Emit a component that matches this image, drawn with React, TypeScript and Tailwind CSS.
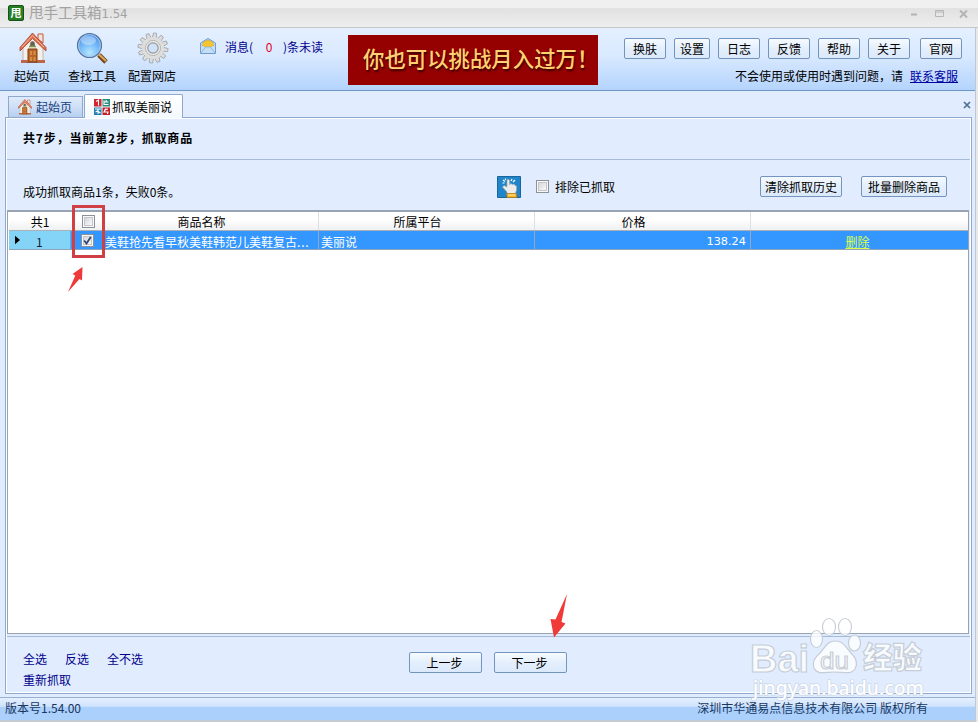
import React from "react";

const HouseIcon = ({ className }: { className: string }) => (
  <svg viewBox="0 0 28 32" className={className}>
    <path d="M19 2h5v9l-5-4z" fill="#f3e3dc" stroke="#c4583c" strokeWidth="1" />
    <path d="M4 14 14 4l10 10v16H4z" fill="#f4efe9" stroke="#b9aaa0" strokeWidth="0.8" />
    <path d="M1 15.500 13.500 1 27 15.500v3.500L13.500 6.500 1 19z" fill="#dd7354" stroke="#b34a30" strokeWidth="0.9" />
    <path d="M3 15 13.500 3.500 25 15" fill="none" stroke="#f3b9a3" strokeWidth="0.900" />
    <path d="M11.500 14v-2.500a2 2 0 0 1 4 0V14z" fill="#55656b" stroke="#8a6b3c" strokeWidth="0.8" />
    <path d="M10 14.500h7" stroke="#7a9a44" strokeWidth="1.500" />
    <path d="M9 17h9v13H9z" fill="#b86628" stroke="#7d3c10" strokeWidth="1" />
    <path d="M11 19h2v4h-2zM14.500 19h2v4h-2zM11 25h2v4h-2zM14.500 25h2v4h-2z" fill="#d98c48" />
    <path d="M2 28h7v3H2zM18 28h8v3h-8z" fill="#bd6449" />
    <path d="M8 30.500h11" stroke="#8a5236" />
  </svg>
);

const SearchIcon = () => (
  <svg viewBox="0 0 32 32" className="h-8 w-8">
    <defs>
      <radialGradient id="lens" cx="0.5" cy="0.8" r="0.8">
        <stop offset="0" stopColor="#b6e8ff" />
        <stop offset="0.5" stopColor="#74b9f8" />
        <stop offset="1" stopColor="#4a8fe8" />
      </radialGradient>
    </defs>
    <path d="m20 20 4 4" stroke="#b8b8b8" strokeWidth="3" />
    <path d="m23 23 7 7" stroke="#74481d" strokeWidth="5" />
    <path d="m23 22.500 7 6.500" stroke="#dda75d" strokeWidth="2" />
    <circle cx="13.500" cy="13.500" r="12" fill="url(#lens)" stroke="#56729b" strokeWidth="1.200" />
    <circle cx="13.500" cy="13.500" r="10.900" fill="none" stroke="#a9c8ec" strokeWidth="1" />
    <ellipse cx="12.500" cy="8.500" rx="7.500" ry="4.500" fill="#fff" opacity="0.35" />
  </svg>
);

const teeth = [0, 30, 60, 90, 120, 150, 180, 210, 240, 270, 300, 330];

const GearIcon = () => (
  <svg viewBox="0 0 32 32" className="h-8 w-8">
    <g fill="#dcdcdc" stroke="#999" strokeWidth="0.7">
      {teeth.map((deg) => (
        <path key={deg} d="m13.800 6 .7-5h3l.7 5z" transform={`rotate(${deg + 8} 16 16)`} />
      ))}
    </g>
    <circle cx="16" cy="16" r="11" fill="#dedede" />
    <circle cx="16" cy="16" r="7.600" fill="#e9e9e9" stroke="#b9b9b9" strokeWidth="1" />
    <circle cx="16" cy="16" r="5.200" fill="#cfe2fa" stroke="#999" strokeWidth="1.200" />
  </svg>
);

const MailIcon = () => (
  <svg viewBox="0 0 16 16" className="h-4 w-4">
    <path d="M.5 5 8 .500 15.500 5v10.500H.5z" fill="#b9d6f2" stroke="#6f9ccb" />
    <path d="M2.500 8C2.500 4 5 2.500 8 2.500S13.500 4 13.500 8L8 10z" fill="#f6c62f" stroke="#d99f1b" strokeWidth="0.6" />
    <path d="M1 7.500 5 9h6l4-1.500V15H1z" fill="#c6def5" />
    <path d="m1 15 4.500-6h5L15 15" fill="none" stroke="#86aed6" strokeWidth="0.8" />
  </svg>
);

const ShopIcon = () => (
  <svg viewBox="0 0 16 16" className="h-4 w-4">
    <path d="M0 0h7.500v7.500H0z" fill="#cf2530" />
    <path d="M8.500 0H16v7.500H8.500z" fill="#2b8c7e" />
    <path d="M0 8.500h7.500V16H0z" fill="#1f7fb2" />
    <path d="M8.500 8.500H16V16H8.500z" fill="#c3202a" />
    <path
      d="M2 2.500 4.500 1v5.500M10 1.500v4h4.500M10 3h4.500M12.200 1v2M1 10h6M4 10v5M1.500 13l2-1 3 2M10 11l4-1M12 9.500l-2 3.500h4l-.5 2"
      fill="none"
      stroke="#fff"
      strokeWidth="1.100"
    />
  </svg>
);

const HandIcon = () => (
  <svg viewBox="0 0 24 22" className="h-[22px] w-6">
    <path d="M.5.5h23v21H.5z" fill="#2185ca" stroke="#17669f" />
    <path d="M10 19v-3l-4.500-5 1.500-1.500L10 11V4.500C10 3 12.500 3 12.500 4.500V9l1-1.500 2 1 1.500-.5 1 1.500 1.500.5V14l-1 3v2z" fill="#ececec" stroke="#aaa" strokeWidth="0.6" />
    <path d="m6 4 2 1.500M7.500 7H5.500M8.500 2.500V4M15 3l-1 2M18 4l-2 2" stroke="#fff" strokeWidth="1.200" />
    <path d="M10 17.500h9.500v4H10z" fill="#f5b62d" stroke="#b87812" strokeWidth="0.8" />
    <path d="M11 19h7.500" stroke="#ffe58b" />
  </svg>
);

const Button = ({ label, className }: { label: string; className: string }) => (
  <button
    className={`flex h-[21px] shrink-0 items-center justify-center rounded-[2px] border border-[#7395bd] bg-linear-to-b from-[#f6faff] from-0% via-[#e4effc] via-50% to-[#dbe9fb] whitespace-nowrap ${className}`}
  >
    <span>{label}</span>
  </button>
);

const Checkbox = ({ checked }: { checked?: boolean }) => (
  <span className="flex h-[13px] w-[13px] shrink-0 items-center justify-center border border-[#8e9297] bg-[#f8f8f8] p-px">
    <span className="flex h-full w-full items-center justify-center border border-[#c3c7cc] bg-linear-to-br from-[#d4d7db] to-[#fafafa]">
      {checked && (
        <svg viewBox="0 0 9 9" className="h-[9px] w-[9px] shrink-0">
          <path d="m1.200 4.500 2.300 3L7.800 1" fill="none" stroke="#31456f" strokeWidth="1.800" />
        </svg>
      )}
    </span>
  </span>
);

const TitleBar = () => (
  <div className="flex h-7 items-center border-b border-[#c3c6ca] bg-linear-to-b from-[#f0f0f0] from-28% via-[#e1e1e1] via-32% to-[#eeeeee] pl-2">
    <div className="mb-0.5 flex h-4 w-4 items-center justify-center rounded-[2px] border border-[#16531a] bg-[#287d23] text-[11px] leading-none font-bold text-white">
      甩
    </div>
    <span className="mb-0.5 ml-[5px] text-[14.5px] leading-5 text-[#a2a2a2]">
      甩手工具箱<span className="text-[13px] [font-family:'DejaVu_Sans_Condensed','DejaVu_Sans',sans-serif]">1.54</span>
    </span>
    <svg viewBox="0 0 60 12" className="mr-[9px] ml-auto h-3 w-[60px]">
      <path d="M2 6.500h6" stroke="#b3b3b3" strokeWidth="2" />
      <path d="M26.500 2.500h8v6h-8zM26 4h9" fill="none" stroke="#b7b7b7" />
      <path d="m51 2.500 7 7m0-7-7 7" stroke="#b3b3b3" strokeWidth="1.800" />
    </svg>
  </div>
);

const ToolBar = () => (
  <div className="flex h-[63px] items-start border-b border-[#6f97c4] bg-linear-to-b from-[#e4f0ff] from-0% via-[#d9e9ff] via-45% to-[#b4d4fd] pl-3.5">
    <div className="flex w-9 flex-col items-center pt-1">
      <HouseIcon className="ml-0.5 h-8 w-7" />
      <span className="mt-[3px] leading-[18px] whitespace-nowrap">起始页</span>
    </div>
    <div className="ml-[18px] flex w-12 flex-col items-center pt-1">
      <SearchIcon />
      <span className="mt-[3px] leading-[18px] whitespace-nowrap">查找工具</span>
    </div>
    <div className="ml-3 flex w-12 flex-col items-center pt-1">
      <div className="ml-0.5">
        <GearIcon />
      </div>
      <span className="mt-[3px] leading-[18px] whitespace-nowrap">配置网店</span>
    </div>
    <div className="ml-6 flex w-[148px] items-center pt-2.5 text-[#00008b]">
      <div className="mb-0.5">
        <MailIcon />
      </div>
      <span className="ml-[9px] w-[30px] whitespace-nowrap">消息(</span>
      <span className="w-7 text-center text-[#e00020]">0</span>
      <span className="whitespace-nowrap">)条未读</span>
    </div>
    <div className="mt-[7px] flex h-[50px] w-[250px] shrink-0 items-center bg-[#950000] pl-[15px] text-[21.4px] font-medium whitespace-nowrap text-[#ffd173] [text-shadow:1px_2px_2px_#3a0000]">
      <span className="mb-[5px]">你也可以挑战月入过万！</span>
    </div>
    <div className="ml-[26px] flex w-[338px] flex-col pt-2.5">
      <div className="flex">
        <Button label="换肤" className="w-[42px]" />
        <Button label="设置" className="ml-2 w-9" />
        <Button label="日志" className="ml-2 w-[42px]" />
        <Button label="反馈" className="ml-2 w-[42px]" />
        <Button label="帮助" className="ml-2 w-[42px]" />
        <Button label="关于" className="ml-2 w-[42px]" />
        <Button label="官网" className="ml-2.5 w-[42px]" />
      </div>
      <div className="mt-2 flex justify-end pr-1 leading-[18px] whitespace-nowrap">
        <span>不会使用或使用时遇到问题，请</span>
        <a className="ml-[7px] text-[#0000a0] underline">联系客服</a>
      </div>
    </div>
  </div>
);

const Tabs = () => (
  <div className="relative z-10 -mb-px flex h-[27px] items-end pl-2">
    <div className="mb-px flex h-[21px] w-[75px] items-center border border-b-0 border-[#8fa9cc] bg-linear-to-b from-[#dfebfb] from-0% via-[#cfdff6] via-50% to-[#b6cff0] pl-[9px] text-[#173f80]">
      <HouseIcon className="h-4 w-3.5" />
      <span className="ml-1 whitespace-nowrap">起始页</span>
    </div>
    <div className="ml-px flex h-6 w-[99px] items-center rounded-t-[2px] border border-b-0 border-[#8fa9cc] bg-linear-to-b from-white to-[#f4f9ff] pl-[9px]">
      <ShopIcon />
      <span className="ml-0.5 whitespace-nowrap">抓取美丽说</span>
    </div>
    <svg viewBox="0 0 8 8" className="mr-1 mb-[9px] ml-auto h-2 w-2">
      <path d="m1 1 6 6m0-6L1 7" stroke="#4f7094" strokeWidth="1.700" />
    </svg>
  </div>
);

const Table = () => (
  <div className="h-[424px] w-[962px] border border-t-2 border-[#98a4b3] bg-white pl-px">
    <div className="flex h-[19px] border-b border-[#a9b0b8] bg-linear-to-b from-white from-40% to-[#eff0f2] text-center leading-[19px]">
      <div className="w-[62px]">共1</div>
      <div className="flex w-[34px] items-center justify-center">
        <Checkbox />
      </div>
      <div className="w-[214px] border-r border-[#dcdfe3] pr-5">商品名称</div>
      <div className="w-[216px] border-r border-[#dcdfe3] pr-[18px]">所属平台</div>
      <div className="w-[216px] border-r border-[#dcdfe3] pr-[18px]">价格</div>
      <div className="w-[217px]" />
    </div>
    <div className="flex h-[19px] border-b border-[#8fa3bb] bg-[#3397ff] leading-[21px] text-white">
      <div className="flex w-[62px] items-center border-r border-[#6fa7d3] bg-[#84d4f7] pl-1.5 text-[#102038]">
        <svg viewBox="0 0 6 10" className="h-2.5 w-[5px]">
          <path d="M0 0v10l6-5z" fill="#000" />
        </svg>
        <span className="mt-0.5 ml-4">1</span>
      </div>
      <div className="flex w-[34px] items-center pl-2.5">
        <Checkbox checked />
      </div>
      <div className="w-[214px] border-r border-[#91a9c4] whitespace-nowrap">
        美鞋抢先看早秋美鞋韩范儿美鞋复古<span className="tracking-[0.8px]">...</span>
      </div>
      <div className="w-[216px] border-r border-[#91a9c4] pl-0.5">美丽说</div>
      <div className="w-[216px] border-r border-[#91a9c4] pr-1 text-right text-[11.3px] [font-family:'DejaVu_Sans','Noto_Sans_CJK_SC',sans-serif]">
        138.24
      </div>
      <div className="w-[217px] pr-1 text-center text-[#ddff4a] underline">删除</div>
    </div>
  </div>
);

const Watermark = () => (
  <svg viewBox="0 0 190 90" className="absolute top-[612px] left-[745px] h-[90px] w-[190px]">
    <g fill="#ffffff" fillOpacity="0.8" stroke="#bcc3cd" strokeOpacity="0.8" strokeWidth="1.200">
      <ellipse cx="71.500" cy="27" rx="6" ry="8.500" />
      <ellipse cx="84" cy="15" rx="6.500" ry="8.500" />
      <ellipse cx="100" cy="15" rx="6.500" ry="8.500" />
      <ellipse cx="109.500" cy="31" rx="6" ry="8" />
      <path d="M90 29c-8 0-10 7-15 12-6 5-8 10-6 15 3 7 10 4 20 4s17 3 21-3c3-5 1-11-4-16s-7-12-16-12z" />
      <g fontFamily="'Liberation Sans', sans-serif" fontWeight="700">
        <text x="5" y="60" fontSize="38" textLength="59" lengthAdjust="spacingAndGlyphs">Bai</text>
        <text x="75" y="57" fontSize="24" fontWeight="400" textLength="29" lengthAdjust="spacingAndGlyphs">du</text>
      </g>
      <text x="118" y="56" fontSize="29.500" fontWeight="900" fontFamily="'Noto Sans CJK SC', sans-serif">经验</text>
    </g>
    <text
      x="8"
      y="82.500"
      fontSize="19"
      fontWeight="500"
      fill="#fff"
      stroke="#c0cad8"
      strokeWidth="1.600"
      strokeOpacity="0.6"
      paintOrder="stroke"
      textLength="171"
      lengthAdjust="spacingAndGlyphs"
      fontFamily="'Noto Sans', sans-serif"
    >
      jingyan.baidu.com
    </text>
  </svg>
);

const App = () => {
  return (
    <div className="relative h-[722px] w-[978px] overflow-hidden bg-[#e6e8ec] text-[12px] leading-[18px] text-black [font-family:'Noto_Sans_CJK_SC',sans-serif]">
      <TitleBar />
      <div className="h-[694px] w-[976px] border-r border-[#bdc7d5] bg-[#e1edfe]">
        <ToolBar />
        <Tabs />
        <div className="ml-[5px] h-[577px] w-[967px] border border-[#8fa9cc] bg-white p-px">
          <div className="flex h-full w-full flex-col bg-[#e1edfe]">
            <div className="flex h-[41px] shrink-0 items-center border-b border-[#a5bbd8] pb-0.5 pl-4 font-bold tracking-[0.85px]">
              共7步，当前第2步，抓取商品
            </div>
            <div className="flex h-[50px] shrink-0 items-center pl-4">
              <span className="mt-3.5 w-[474px] whitespace-nowrap">成功抓取商品1条，失败0条。</span>
              <div className="mt-[3px] flex items-center">
                <HandIcon />
                <span className="ml-[15px] flex">
                  <Checkbox />
                </span>
                <span className="ml-1.5 w-[205px]">排除已抓取</span>
                <Button label="清除抓取历史" className="w-[82px]" />
                <Button label="批量删除商品" className="ml-[19px] w-[86px]" />
              </div>
            </div>
            <Table />
            <div className="mt-0.5 flex flex-1 border-t border-[#a5bbd8] pl-4">
              <div className="w-[386px] pt-[13px] text-[#00008b]">
                <div className="flex">
                  <span>全选</span>
                  <span className="ml-[18px]">反选</span>
                  <span className="ml-[18px]">全不选</span>
                </div>
                <div className="mt-[3px]">重新抓取</div>
              </div>
              <div className="flex pt-[15px]">
                <Button label="上一步" className="w-[73px] pr-0.5" />
                <Button label="下一步" className="ml-3 w-[73px] pr-0.5" />
              </div>
            </div>
          </div>
        </div>
        <div className="mt-[3px] flex h-[23px] items-center border-t border-[#94b1d5] bg-linear-to-b from-[#e5f0ff] from-0% via-[#cfe2fd] via-38% to-[#acd0fc] to-42% pr-[47px] pb-0.5 pl-[5px] text-[#17375f]">
          <span>版本号1.54.00</span>
          <span className="ml-auto whitespace-nowrap">深圳市华通易点信息技术有限公司 版权所有</span>
        </div>
        <div className="h-0.5 bg-[#c5cbd3]" />
      </div>
      <div className="absolute top-[205px] left-[72px] h-[53px] w-[33px] border-3 border-[#cf3f43]" />
      <svg viewBox="0 0 16 26" className="absolute top-[267px] left-[68px] h-[26px] w-4">
        <path d="M14.500 0 4.500 7l2.800 1.500L0 25l11.500-13 2.500 1.500z" fill="#ed3b3b" />
      </svg>
      <svg viewBox="0 0 18 44" className="absolute top-[594px] left-[550px] h-11 w-[18px]">
        <path d="M17 0 5.500 25.500.500 25 4 43.500 15.500 29.500l-4-1.500z" fill="#f03a38" />
      </svg>
      <Watermark />
    </div>
  );
};

export default App;
